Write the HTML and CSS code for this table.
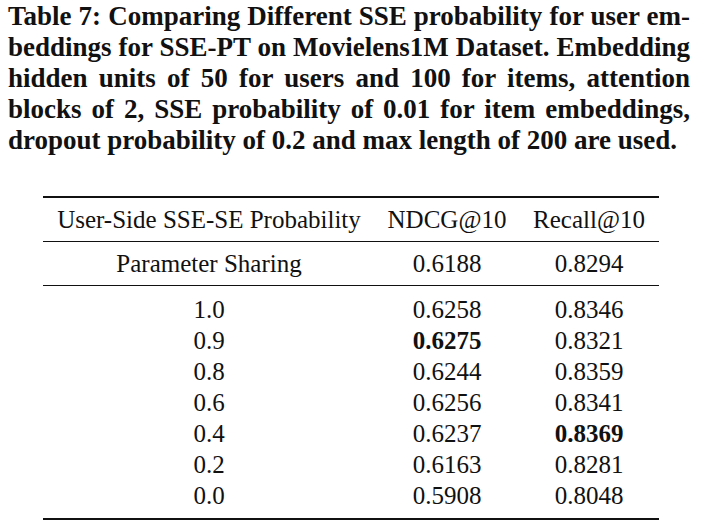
FILE: index.html
```html
<!DOCTYPE html>
<html>
<head>
<meta charset="utf-8">
<link rel="stylesheet" href="styles.css">
</head>
<body>
<div class="page">
  <div class="caption">
    <div class="cline">Table 7: Comparing Different SSE probability for user em-</div>
    <div class="cline">beddings for SSE-PT on Movielens1M Dataset. Embedding</div>
    <div class="cline">hidden units of 50 for users and 100 for items, attention</div>
    <div class="cline">blocks of 2, SSE probability of 0.01 for item embeddings,</div>
    <div class="cline last">dropout probability of 0.2 and max length of 200 are used.</div>
  </div>
  <table class="results">
    <colgroup>
      <col class="c1"><col class="c2"><col class="c3">
    </colgroup>
    <thead>
      <tr><th>User-Side SSE-SE Probability</th><th>NDCG@10</th><th>Recall@10</th></tr>
    </thead>
    <tbody class="shared">
      <tr><td>Parameter Sharing</td><td>0.6188</td><td>0.8294</td></tr>
    </tbody>
    <tbody class="data">
      <tr><td>1.0</td><td>0.6258</td><td>0.8346</td></tr>
      <tr><td>0.9</td><td><b>0.6275</b></td><td>0.8321</td></tr>
      <tr><td>0.8</td><td>0.6244</td><td>0.8359</td></tr>
      <tr><td>0.6</td><td>0.6256</td><td>0.8341</td></tr>
      <tr><td>0.4</td><td>0.6237</td><td><b>0.8369</b></td></tr>
      <tr><td>0.2</td><td>0.6163</td><td>0.8281</td></tr>
      <tr><td>0.0</td><td>0.5908</td><td>0.8048</td></tr>
    </tbody>
  </table>
</div>
</body>
</html>
```
FILE: styles.css
```css
html, body {
  margin: 0;
  padding: 0;
  background: #ffffff;
}
body {
  font-family: "Liberation Serif", "DejaVu Serif", serif;
  color: #111111;
}
.page {
  padding: 1px 0 0 8px;
  width: 682px;
}
.caption {
  font-weight: bold;
  font-size: 27px;
  line-height: 31px;
}
.cline {
  white-space: nowrap;
  text-align: justify;
  text-align-last: justify;
}
.cline.last {
  text-align-last: left;
}
.results {
  margin: 40px 0 0 35px;
  width: 616px;
  border-collapse: collapse;
  table-layout: fixed;
  font-size: 25px;
  border-top: 2px solid #111;
  border-bottom: 2px solid #111;
}
.c1 { width: 332px; }
.c2 { width: 144px; }
.c3 { width: 140px; }
th, td {
  text-align: center;
  padding: 0;
  font-weight: normal;
  line-height: 31px;
}
thead th {
  height: 43px;
  border-bottom: 1px solid #111;
}
.shared td {
  height: 43px;
  border-bottom: 1px solid #111;
}
.data td {
  height: 31px;
}
.data tr:first-child td {
  padding-top: 8px;
}
.data tr:last-child td {
  padding-bottom: 7px;
}
b {
  font-weight: bold;
}
```
